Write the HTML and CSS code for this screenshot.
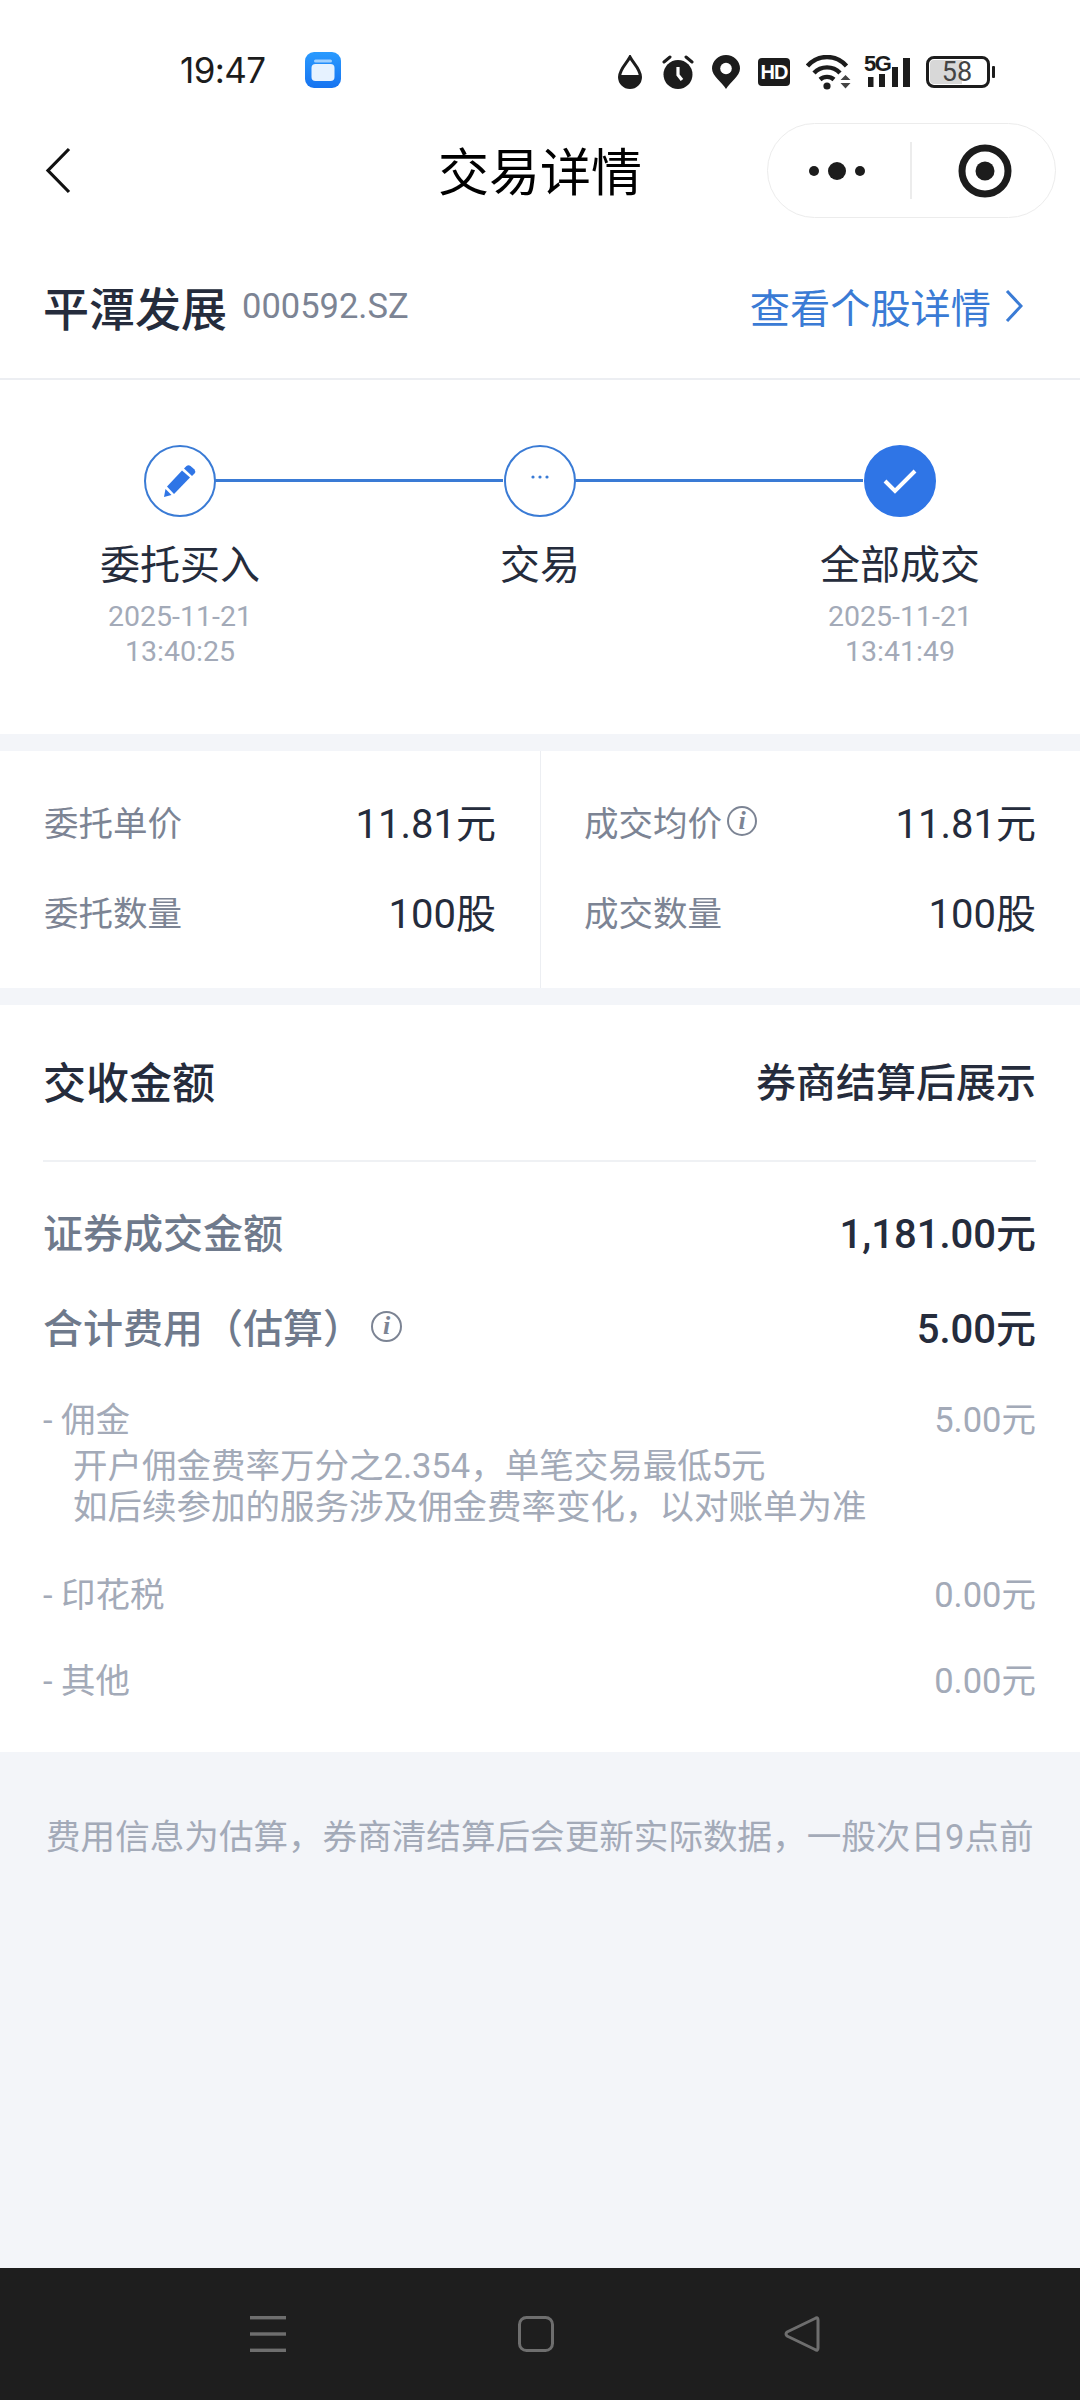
FILE: index.html
```html
<!DOCTYPE html>
<html lang="zh-CN">
<head>
<meta charset="utf-8">
<title>交易详情</title>
<link rel="stylesheet" href="styles.css">
</head>
<body>
<div class="page">
  <header class="status">
    <span class="time">19:47</span>
    <svg class="app-icon" viewBox="0 0 36 36" width="36" height="36">
      <defs><linearGradient id="appg" x1="0" y1="0" x2="0" y2="1"><stop offset="0" stop-color="#2a9bff"/><stop offset="1" stop-color="#1673f0"/></linearGradient></defs>
      <rect width="36" height="36" rx="9" fill="url(#appg)"/>
      <rect x="9" y="7.5" width="18" height="3" rx="1.5" fill="#9fd0ff"/>
      <rect x="6.5" y="12" width="23" height="17" rx="4" fill="#e6f2ff"/>
    </svg>
    <div class="status-icons">
      <svg width="24" height="34" viewBox="0 0 24 34"><path d="M12 2 C9 8 1.5 14 1.5 22 A10.5 10.5 0 0 0 22.5 22 C22.5 14 15 8 12 2 Z" fill="#fff" stroke="#1c1c1c" stroke-width="3"/><path d="M1.5 20 H22.5 V22 A10.5 10.5 0 0 1 1.5 22 Z" fill="#1c1c1c"/></svg>
      <svg class="gap-20" width="32" height="34" viewBox="0 0 32 34"><circle cx="16" cy="19.5" r="14.5" fill="#1c1c1c"/><path d="M16 12 V20 L20 25" fill="none" stroke="#fff" stroke-width="3.2"/><path d="M2 7 L8 2 M30 7 L24 2" stroke="#1c1c1c" stroke-width="3" stroke-linecap="round"/></svg>
      <svg class="gap-18" width="28" height="34" viewBox="0 0 28 34"><path d="M14 34 C10 27 0 21 0 13.5 A14 13.5 0 0 1 28 13.5 C28 21 18 27 14 34 Z" fill="#1c1c1c"/><circle cx="14" cy="13.5" r="5.8" fill="#fff"/></svg>
      <div class="hd gap-18">HD</div>
      <svg class="gap-16" width="45" height="35" viewBox="0 0 45 35"><g fill="none" stroke="#1c1c1c" stroke-width="4.4"><path d="M1.5 11 C12 -1 30 -1 40.5 11"/><path d="M8 18 C15 10.5 27 10.5 34 18"/><path d="M14 24.5 C18 21 24 21 28 24.5"/></g><circle cx="21" cy="31" r="3.6" fill="#1c1c1c"/><path d="M34.5 25 L39.5 20 L44.5 25 Z M34.5 28 L44.5 28 L39.5 33.5 Z" fill="#444"/></svg>
      <div class="signal gap-13">
        <span class="five-g">5G</span>
        <svg width="46" height="32" viewBox="0 0 46 32"><g fill="#1c1c1c"><rect x="4" y="21" width="5.5" height="10"/><rect x="15" y="18" width="6" height="13"/><rect x="28" y="11" width="6" height="20"/><rect x="39" y="2" width="7" height="29"/></g></svg>
      </div>
      <div class="battery gap-16"><span class="batt-fill"></span><span class="batt-num">58</span><span class="batt-tip"></span></div>
    </div>
  </header>

  <nav class="nav">
    <svg class="back" width="27" height="47" viewBox="0 0 27 47"><path d="M24 2 L3 23.5 L24 45" fill="none" stroke="#111" stroke-width="3.2"/></svg>
    <h1 class="title">交易详情</h1>
    <div class="capsule">
      <div class="cap-more"><svg width="76" height="20" viewBox="0 0 76 20"><circle cx="10" cy="10" r="5" fill="#1c1c1c"/><circle cx="33" cy="10" r="9" fill="#1c1c1c"/><circle cx="56" cy="10" r="5" fill="#1c1c1c"/></svg></div>
      <div class="cap-sep"></div>
      <div class="cap-close"><svg width="54" height="54" viewBox="0 0 54 54"><circle cx="27" cy="27" r="23" fill="none" stroke="#1c1c1c" stroke-width="7"/><circle cx="27" cy="27" r="9.5" fill="#1c1c1c"/></svg></div>
    </div>
  </nav>

  <section class="stock">
    <div class="stock-id"><span class="stock-name">平潭发展</span><span class="stock-code">000592.SZ</span></div>
    <div class="stock-link"><span>查看个股详情</span><svg width="18" height="34" viewBox="0 0 18 34"><path d="M2 2 L16 17 L2 32" fill="none" stroke="#3a7bd5" stroke-width="3"/></svg></div>
  </section>

  <section class="steps">
    <div class="step">
      <div class="circle line-after"><svg width="34" height="34" viewBox="0 0 34 34"><g fill="#2f75e6"><path d="M1 33 L2.5 25 L8.5 31 Z"/><path d="M4 22.5 L19 6.5 L27 13.5 L11 30 Z"/><path d="M21 4.5 L23.5 2 Q25.5 0.5 27.5 2 L31.5 5.5 Q33 7.5 31.5 9.5 L29 12 Z"/></g></svg></div>
      <div class="step-name">委托买入</div>
      <div class="step-time">2025-11-21<br>13:40:25</div>
    </div>
    <div class="step">
      <div class="circle line-after"><svg class="dots" width="20" height="6" viewBox="0 0 20 6"><g fill="#3a7bd5"><circle cx="3" cy="3" r="1.6"/><circle cx="10" cy="3" r="1.6"/><circle cx="17" cy="3" r="1.6"/></g></svg></div>
      <div class="step-name">交易</div>
    </div>
    <div class="step">
      <div class="circle circle-done"><svg width="34" height="26" viewBox="0 0 34 26"><path d="M2 13 L12 23 L32 3" fill="none" stroke="#fff" stroke-width="4"/></svg></div>
      <div class="step-name">全部成交</div>
      <div class="step-time">2025-11-21<br>13:41:49</div>
    </div>
  </section>

  <section class="prices">
    <div class="price-col">
      <div class="price-row"><span class="price-label">委托单价</span><span class="price-val">11.81元</span></div>
      <div class="price-row"><span class="price-label">委托数量</span><span class="price-val">100股</span></div>
    </div>
    <div class="price-col price-col-right">
      <div class="price-row"><span class="price-label">成交均价<i class="info info-sm">i</i></span><span class="price-val">11.81元</span></div>
      <div class="price-row"><span class="price-label">成交数量</span><span class="price-val">100股</span></div>
    </div>
  </section>

  <section class="settle">
    <div class="settle-head"><span class="settle-title">交收金额</span><span class="settle-note">券商结算后展示</span></div>
    <div class="sum-row sum-row-first"><span class="sum-label">证券成交金额</span><span class="sum-val">1,181.00元</span></div>
    <div class="sum-row"><span class="sum-label">合计费用（估算）<i class="info info-lg">i</i></span><span class="sum-val">5.00元</span></div>
    <div class="fee fee-first">
      <div class="fee-main"><span>- 佣金</span><span>5.00元</span></div>
      <p class="fee-desc">开户佣金费率万分之2.354，单笔交易最低5元<br>如后续参加的服务涉及佣金费率变化，以对账单为准</p>
    </div>
    <div class="fee fee-stamp"><div class="fee-main"><span>- 印花税</span><span>0.00元</span></div></div>
    <div class="fee fee-other"><div class="fee-main"><span>- 其他</span><span>0.00元</span></div></div>
  </section>

  <p class="footnote">费用信息为估算，券商清结算后会更新实际数据，一般次日9点前</p>

  <footer class="sysbar">
    <svg width="36" height="36" viewBox="0 0 36 36"><g fill="#6e6e6e"><rect y="0" width="36" height="3.4"/><rect y="16.3" width="36" height="3.4"/><rect y="32.6" width="36" height="3.4"/></g></svg>
    <svg width="36" height="36" viewBox="0 0 36 36"><rect x="1.5" y="1.5" width="33" height="33" rx="7" fill="none" stroke="#6e6e6e" stroke-width="3"/></svg>
    <svg class="sys-back" width="36" height="36" viewBox="0 0 36 36"><path d="M31 2.5 Q34 0.5 34 4 V32 Q34 35.5 31 33.5 L3 20 Q1 18 3 16 Z" fill="none" stroke="#6e6e6e" stroke-width="3" stroke-linejoin="round"/></svg>
  </footer>
</div>
</body>
</html>
```

FILE: styles.css
```css
* { box-sizing: border-box; }
html, body { margin: 0; padding: 0; }
body { font-family: Roboto, "Noto Sans CJK SC", sans-serif; color: #252c3c; }
.page { width: 1080px; height: 2400px; display: flex; flex-direction: column; background: #f3f5f9; overflow: hidden; }

.status { height: 123px; background: #fff; display: flex; align-items: center; padding: 17px 0 0 180px; }
.time { font-family: Inter, Roboto, sans-serif; font-size: 35px; color: #1c1c1c; width: 125px; letter-spacing: -0.6px; }
.status-icons { margin-left: 277px; display: flex; align-items: center; position: relative; top: 2px; }
.gap-20 { margin-left: 20px; }
.gap-18 { margin-left: 18px; }
.gap-16 { margin-left: 16px; }
.gap-13 { margin-left: 13px; }
.hd { width: 32px; height: 28px; border-radius: 4px; background: #1c1c1c; color: #fff; font: 700 20px/28px "Liberation Sans", sans-serif; text-align: center; letter-spacing: -1px; }
.signal { position: relative; width: 46px; height: 32px; display: flex; }
.five-g { position: absolute; left: 0; top: -2px; font: 700 22px/20px "Liberation Sans", sans-serif; color: #1c1c1c; letter-spacing: -1.6px; }
.battery { position: relative; width: 64px; height: 32px; border: 3px solid #1c1c1c; border-radius: 8px; display: flex; align-items: center; justify-content: center; }
.batt-fill { position: absolute; left: 1px; top: 1px; bottom: 1px; width: 32px; border-radius: 4px 0 0 4px; background: #d8d8d8; }
.batt-num { position: relative; font: 400 27px/26px Roboto, sans-serif; color: #444; padding-right: 2px; }
.batt-tip { position: absolute; right: -8px; top: 7px; width: 3px; height: 12px; border-radius: 1px; background: #1c1c1c; }

.nav { height: 95px; background: #fff; display: grid; grid-template-columns: 1fr auto 1fr; align-items: center; }
.back { margin-left: 45px; }
.title { margin: 7px 0 0; font-size: 51px; line-height: 60px; font-weight: 400; color: #000; }
.capsule { justify-self: end; margin-right: 24px; width: 289px; height: 95px; border: 1.5px solid #ececec; border-radius: 48px; display: flex; align-items: center; }
.cap-more { margin-left: 36px; width: 106px; display: flex; }
.cap-sep { width: 2px; height: 57px; background: #ececec; }
.cap-close { margin-left: 46px; display: flex; }

.stock { height: 162px; background: #fff; border-bottom: 2px solid #eceef2; display: flex; align-items: center; justify-content: space-between; padding: 15px 57px 0 43px; }
.stock-id { display: flex; align-items: center; }
.stock-name { font-size: 46px; font-weight: 500; }
.stock-code { margin-left: 15px; font-size: 34.5px; color: #7c8494; }
.stock-link { display: flex; align-items: center; gap: 14px; font-size: 40.2px; color: #3a7bd5; }

.steps { height: 354px; background: #fff; display: grid; grid-template-columns: repeat(3, 360px); padding-top: 65px; margin-bottom: 17px; }
.step { display: flex; flex-direction: column; align-items: center; }
.circle { position: relative; width: 72px; height: 72px; border-radius: 50%; border: 2.5px solid #3a7bd5; background: #fff; display: flex; align-items: center; justify-content: center; flex: none; }
.dots { margin-bottom: 8px; }
.line-after::after { content: ""; position: absolute; left: 100%; top: 32px; width: 289px; height: 3px; background: #3a7bd5; }
.circle-done { background: #2f75e6; border-color: #2f75e6; }
.step-name { margin-top: 24px; font-size: 40px; line-height: 50px; }
.step-time { margin-top: 8px; font-size: 28.5px; line-height: 35px; color: #a3aab8; text-align: center; }

.prices { height: 237px; background: #fff; display: grid; grid-template-columns: 540px 540px; margin-bottom: 17px; }
.price-col { padding: 47px 44px 0 44px; display: flex; flex-direction: column; gap: 44px; }
.price-col-right { border-left: 1px solid #eceef2; padding-left: 43px; padding-top: 47px; gap: 44px; }
.price-row { height: 46px; display: flex; align-items: center; justify-content: space-between; }
.price-label { font-size: 34.5px; color: #7c8494; display: flex; align-items: center; }
.price-val { font-size: 40px; color: #252c3c; }
.info { display: inline-flex; align-items: center; justify-content: center; border-radius: 50%; border: 2.5px solid #7c8494; color: #7c8494; font-family: "Liberation Serif", serif; font-style: italic; font-weight: 700; }
.info-sm { width: 30px; height: 30px; font-size: 26px; margin-left: 5px; }
.info-lg { width: 31px; height: 31px; font-size: 26px; margin-left: 8px; }

.settle { height: 747px; background: #fff; padding: 0 44px 0 43px; }
.settle-head { height: 157px; padding-bottom: 6px; border-bottom: 2px solid #eff1f4; display: flex; align-items: center; justify-content: space-between; }
.settle-title { font-size: 43px; font-weight: 500; }
.settle-note { font-size: 40px; font-weight: 500; }
.sum-row { height: 50px; margin-top: 45px; display: flex; align-items: center; justify-content: space-between; }
.sum-row-first { margin-top: 44px; }
.sum-label { font-size: 40px; font-weight: 500; color: #6f7a8c; display: flex; align-items: center; }
.sum-val { font-size: 40px; font-weight: 500; }
.fee { color: #a3aab8; font-size: 34.5px; }
.fee-first { margin-top: 43px; }
.fee-stamp { margin-top: 41px; }
.fee-other { margin-top: 40px; }
.fee-main { height: 46px; display: flex; align-items: center; justify-content: space-between; }
.fee-desc { margin: 6px 0 0 30px; font-size: 34.5px; line-height: 41px; }

.footnote { margin: 60px 0 0; padding: 0 0 0 46px; font-size: 34.6px; line-height: 50px; color: #a3aab8; white-space: nowrap; }

.sysbar { margin-top: auto; height: 132px; background: #1e1e1e; display: flex; align-items: flex-start; padding: 48px 0 0 250px; gap: 232px; }
.sys-back { margin-left: -2px; }
```
